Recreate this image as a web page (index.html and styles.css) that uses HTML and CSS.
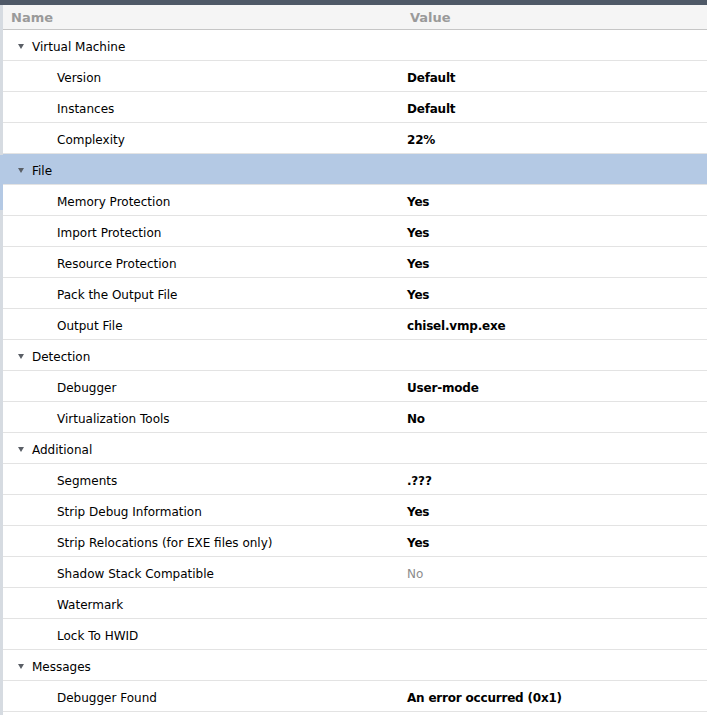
FILE: index.html
```html
<!DOCTYPE html>
<html>
<head>
<meta charset="utf-8">
<link rel="stylesheet" href="styles.css">
</head>
<body>
<div class="topbar"></div>
<div class="frame">
  <div class="strip"><div class="strip-sel"></div></div>
  <div class="tree">
    <div class="hdr">
      <div class="hname">Name</div>
      <div class="hval">Value</div>
    </div>
    <div class="row group"><div class="name"><span class="tri"></span>Virtual Machine</div><div class="val"></div></div>
    <div class="row"><div class="name child">Version</div><div class="val">Default</div></div>
    <div class="row"><div class="name child">Instances</div><div class="val">Default</div></div>
    <div class="row"><div class="name child">Complexity</div><div class="val">22%</div></div>
    <div class="row group sel"><div class="name"><span class="tri"></span>File</div><div class="val"></div></div>
    <div class="row"><div class="name child">Memory Protection</div><div class="val">Yes</div></div>
    <div class="row"><div class="name child">Import Protection</div><div class="val">Yes</div></div>
    <div class="row"><div class="name child">Resource Protection</div><div class="val">Yes</div></div>
    <div class="row"><div class="name child">Pack the Output File</div><div class="val">Yes</div></div>
    <div class="row"><div class="name child">Output File</div><div class="val">chisel.vmp.exe</div></div>
    <div class="row group"><div class="name"><span class="tri"></span>Detection</div><div class="val"></div></div>
    <div class="row"><div class="name child">Debugger</div><div class="val">User-mode</div></div>
    <div class="row"><div class="name child">Virtualization Tools</div><div class="val">No</div></div>
    <div class="row group"><div class="name"><span class="tri"></span>Additional</div><div class="val"></div></div>
    <div class="row"><div class="name child">Segments</div><div class="val">.???</div></div>
    <div class="row"><div class="name child">Strip Debug Information</div><div class="val">Yes</div></div>
    <div class="row"><div class="name child">Strip Relocations (for EXE files only)</div><div class="val">Yes</div></div>
    <div class="row"><div class="name child">Shadow Stack Compatible</div><div class="val dis">No</div></div>
    <div class="row"><div class="name child">Watermark</div><div class="val"></div></div>
    <div class="row"><div class="name child">Lock To HWID</div><div class="val"></div></div>
    <div class="row group"><div class="name"><span class="tri"></span>Messages</div><div class="val"></div></div>
    <div class="row"><div class="name child">Debugger Found</div><div class="val">An error occurred (0x1)</div></div>
  </div>
</div>
</body>
</html>
```

FILE: styles.css
```css
html, body {
  margin: 0;
  padding: 0;
  background: #ffffff;
  height: 715px;
  overflow: hidden;
}
body {
  font-family: "DejaVu Sans", Verdana, sans-serif;
  font-size: 12px;
  color: #000;
}
.topbar {
  height: 5px;
  background: #4f5967;
}
.frame {
  display: flex;
  height: 710px;
}
.strip {
  width: 3px;
  background: #d6dbe1;
  position: relative;
}
.strip-sel {
  position: absolute;
  left: 0;
  top: 150px;
  width: 3px;
  height: 55px;
  background: #b4c9e4;
}
.tree {
  flex: 1;
  display: flex;
  flex-direction: column;
}
.hdr {
  display: grid;
  grid-template-columns: 397px 1fr;
  height: 24px;
  background: #f5f5f5;
  border-bottom: 1px solid #c6c6c6;
  align-items: center;
  font-weight: bold;
  color: #9a9a9a;
  font-size: 13px;
}
.hname { padding-left: 8px; }
.hval { padding-left: 10px; }
.row {
  display: grid;
  grid-template-columns: 397px 1fr;
  height: 26px;
  padding-top: 4px;
  border-bottom: 1px solid #e3e3e3;
  align-items: center;
}
.row.sel {
  background: #b4c9e4;
}
.name {
  display: flex;
  align-items: center;
  padding-left: 15px;
}
.name.child {
  padding-left: 54px;
}
.tri {
  width: 0;
  height: 0;
  border-left: 3.5px solid transparent;
  border-right: 3.5px solid transparent;
  border-top: 5px solid #5a5f66;
  margin-right: 8px;
  margin-top: -2px;
}
.val {
  padding-left: 7px;
  font-weight: bold;
  letter-spacing: -0.2px;
}
.val.dis {
  font-weight: normal;
  letter-spacing: 0;
  color: #8c8c8c;
}
```
